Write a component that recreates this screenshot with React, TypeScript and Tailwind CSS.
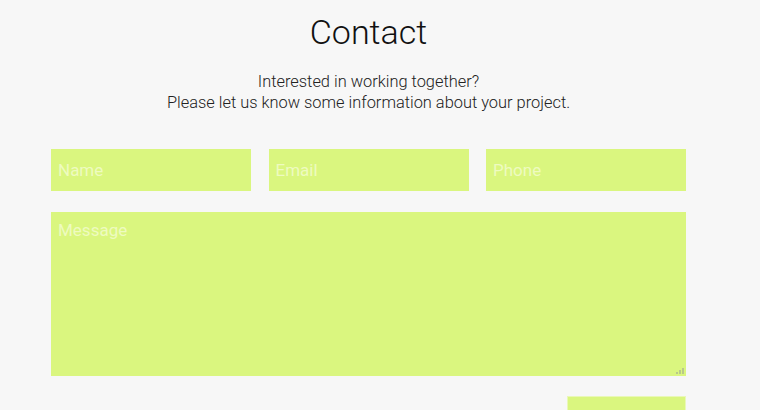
export default function App() {
  return (
    <div className="min-h-[410px] bg-[#f7f7f7] font-['Roboto',sans-serif] text-[#111]">
      <div className="ml-[51px] w-[635px] pt-[10px]">
        <h1 className="text-center text-[34px] font-light leading-[44px]">Contact</h1>
        <p className="mt-[17px] text-center text-[16.4px] font-light leading-[21px] text-[#222]">
          Interested in working together?
          <br />
          Please let us know some information about your project.
        </p>
        <form className="mt-[36px]">
          <div className="flex justify-between">
            <input
              autoFocus
              placeholder="Name"
              className="h-[42px] w-[200px] bg-[#daf67f] px-[7px] text-[17px] caret-[#eefbc0] outline-none placeholder:text-[#eefbc0]"
            />
            <input
              placeholder="Email"
              className="h-[42px] w-[200px] bg-[#daf67f] px-[7px] text-[17px] outline-none placeholder:text-[#eefbc0]"
            />
            <input
              placeholder="Phone"
              className="h-[42px] w-[200px] bg-[#daf67f] px-[7px] text-[17px] outline-none placeholder:text-[#eefbc0]"
            />
          </div>
          <div className="relative mt-[21px]">
            <textarea
              placeholder="Message"
              className="block h-[164px] w-[635px] resize-none bg-[#daf67f] px-[7px] pt-[6px] pb-[7px] text-[17px] outline-none placeholder:text-[#eefbc0]"
            />
            {/* resize grip */}
            <div className="pointer-events-none absolute right-[2px] bottom-[2px] flex items-end gap-[1px]">
              <span className="h-[2px] w-[2px] bg-[#b9c98a]" />
              <span className="h-[4px] w-[2px] bg-[#b9c98a]" />
              <span className="h-[6px] w-[2px] bg-[#b9c98a]" />
            </div>
          </div>
          <div className="mt-[20px] flex justify-end">
            <button
              type="button"
              className="h-[60px] w-[119px] border border-[#eaf8b8] bg-[#daf67f] text-[17px] text-white"
            >
              Send
            </button>
          </div>
        </form>
      </div>
    </div>
  );
}
